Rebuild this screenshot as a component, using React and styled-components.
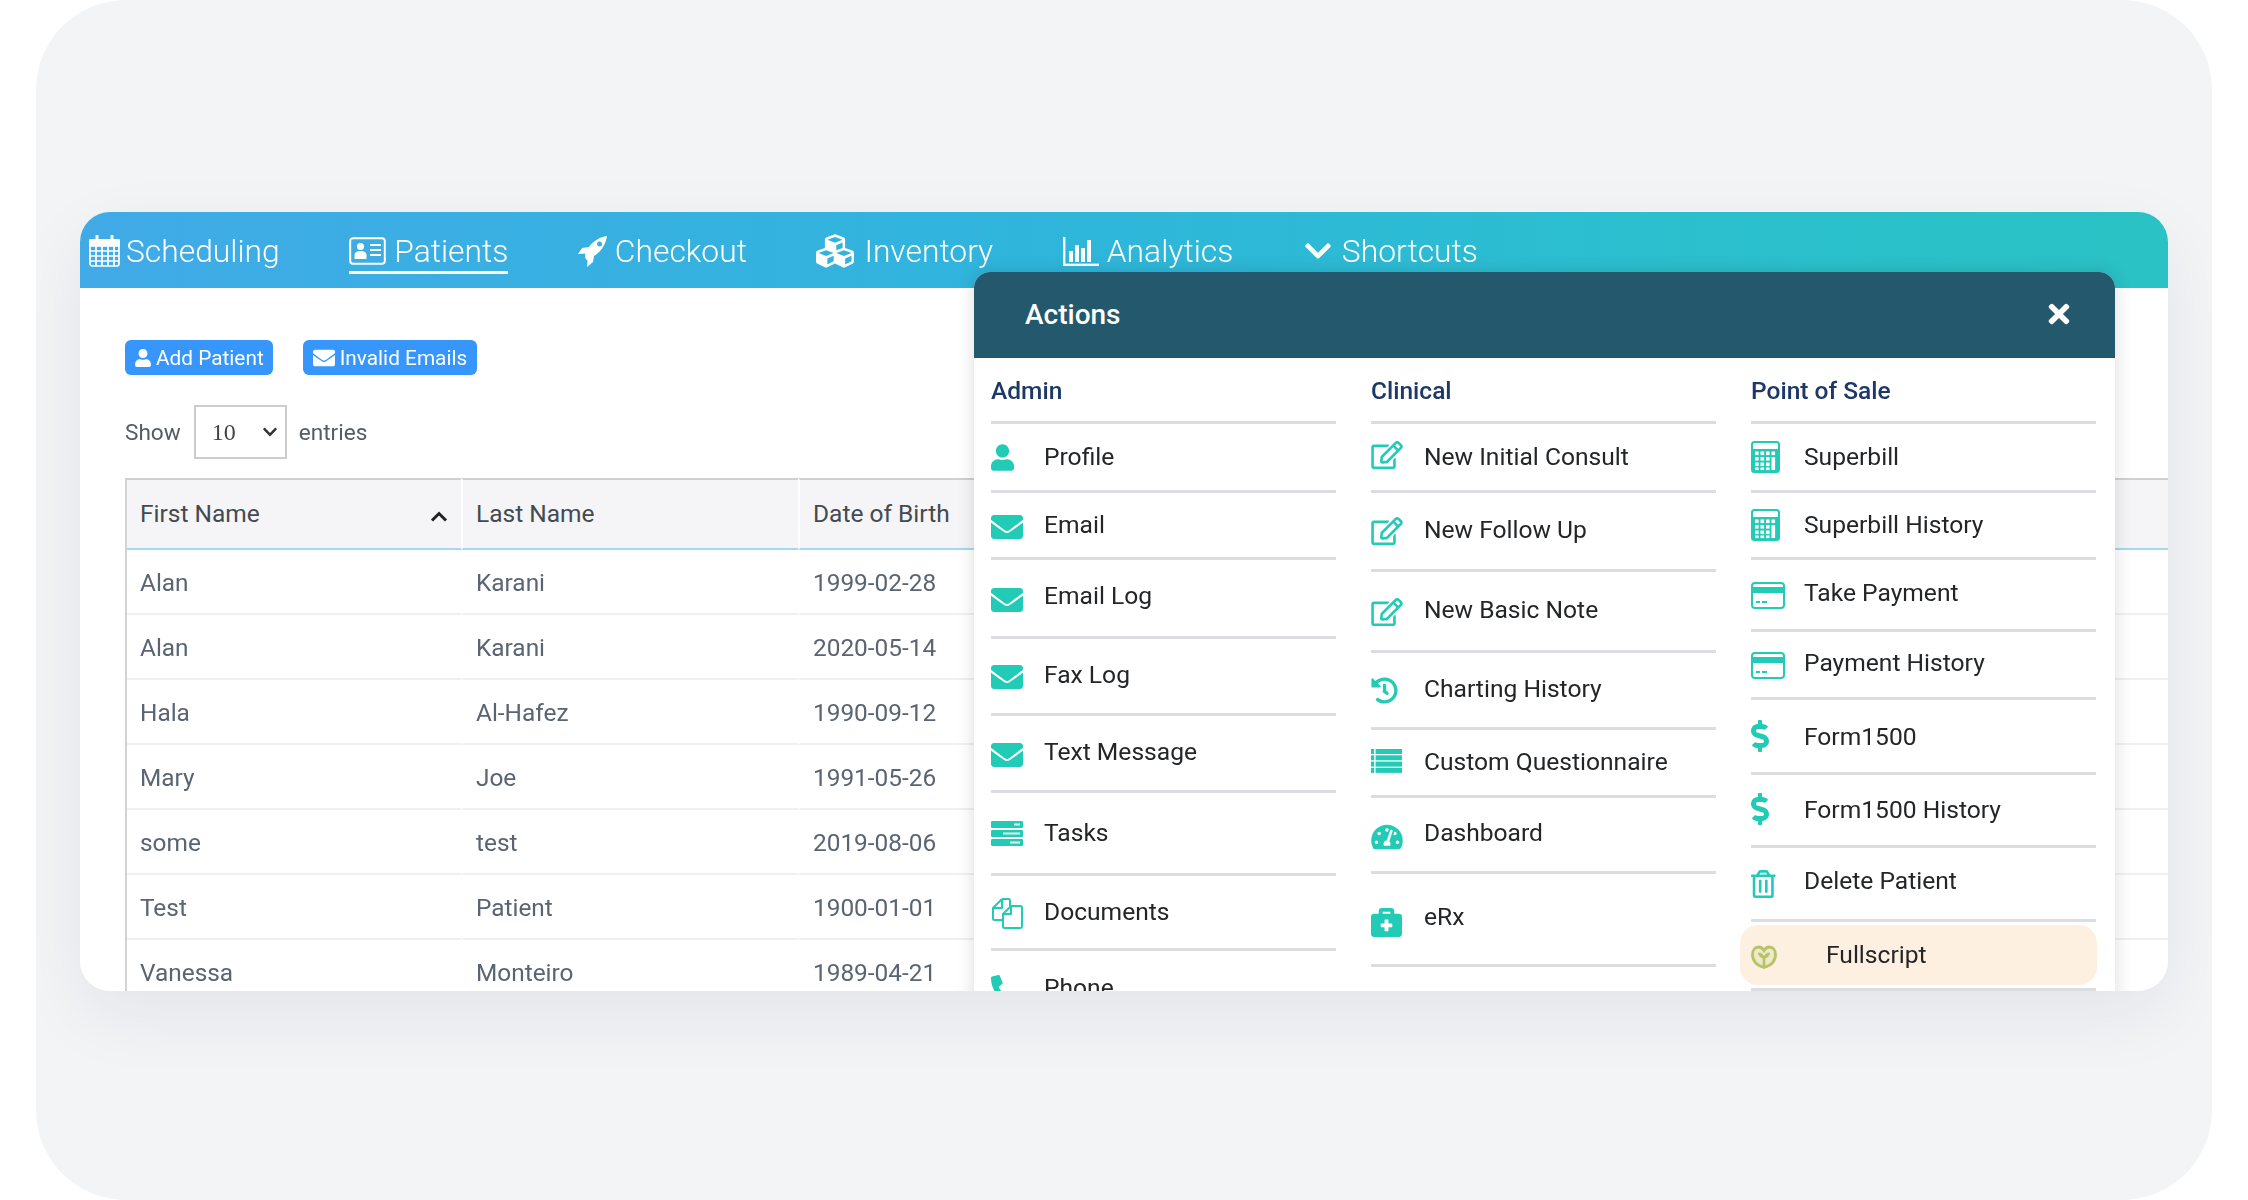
import React from 'react';
import styled, { createGlobalStyle } from 'styled-components';
import {
  FaUser,
  FaEnvelope,
  FaCubes,
  FaChevronDown,
  FaTimes,
  FaRegEdit,
  FaHistory,
  FaTachometerAlt,
  FaBriefcaseMedical,
  FaDollarSign,
  FaRegTrashAlt,
  FaPhoneAlt,
} from 'react-icons/fa';

const GlobalStyle = createGlobalStyle`
  html, body {
    margin: 0;
    padding: 0;
    background: #ffffff;
    overflow: hidden;
    font-family: Roboto, "Liberation Sans", sans-serif;
  }
  * {
    box-sizing: border-box;
  }
`;

const Page = styled.div`
  width: 2248px;
  height: 1200px;
  padding: 0 36px;
`;

const Backdrop = styled.div`
  height: 1200px;
  padding: 212px 44px 0;
  background: #f3f4f6;
  border-radius: 90px;
  overflow: hidden;
`;

const Window = styled.div`
  position: relative;
  height: 779px;
  background: #ffffff;
  border-radius: 30px;
  overflow: hidden;
  box-shadow: 0 24px 70px rgba(20, 30, 50, 0.07);
  /* the shot is an upscaled capture, everything in it is a bit soft */
  filter: blur(0.6px);
`;

const Nav = styled.nav`
  height: 76px;
  padding: 2px 0 0 9px;
  display: flex;
  align-items: center;
  gap: 69.5px;
  background: linear-gradient(90deg, #41aae7 0%, #2fb5dc 45%, #2bbfcf 75%, #2ac2c4 100%);
`;

const NavItem = styled.a`
  position: relative;
  display: flex;
  align-items: center;
  gap: ${(p) => p.$gap || 8}px;
  color: #ffffff;
  font-size: 31.8px;
  font-weight: 300;
  line-height: 40px;

  ${(p) =>
    p.$active &&
    `
    &::after {
      content: '';
      position: absolute;
      left: 0;
      right: 0;
      bottom: -3px;
      height: 3px;
      background: #ffffff;
    }
  `}
`;

const Content = styled.div`
  padding: 52px 0 0 45px;
`;

const Actions = styled.div`
  display: flex;
  gap: 30px;
`;

const Button = styled.button`
  height: 35px;
  padding: 0 ${(p) => p.$pad || 9}px;
  display: flex;
  align-items: center;
  gap: ${(p) => p.$gap || 4}px;
  border: 0;
  border-radius: 6px;
  background: #3696fb;
  color: #ffffff;
  font-family: inherit;
  font-size: 20.8px;
`;

const LengthRow = styled.label`
  margin-top: 30px;
  height: 54px;
  display: flex;
  align-items: center;
  color: #555b63;
  font-size: 22.6px;
`;

const SelectWrap = styled.span`
  position: relative;
  margin: 0 12px 0 13px;
  display: flex;
  color: #333333;
`;

const Select = styled.select`
  width: 93px;
  height: 54px;
  padding-left: 16px;
  appearance: none;
  border: 2px solid #cccccc;
  border-radius: 0;
  background: #ffffff;
  color: #444444;
  font-family: 'Liberation Serif', serif;
  font-size: 24px;
`;

const Caret = styled(FaChevronDown)`
  position: absolute;
  right: 9px;
  top: 19px;
  width: 16px;
  height: 16px;
`;

const Table = styled.table`
  width: 100%;
  margin-top: 19px;
  table-layout: fixed;
  border-collapse: separate;
  border-spacing: 0;
  border-left: 2px solid #d2d3d6;
`;

const Th = styled.th`
  position: relative;
  width: ${(p) => p.$w || 'auto'};
  height: 72px;
  padding: 0 0 2px 13px;
  border-top: 2px solid #cfd0d3;
  border-bottom: 2px solid #a4d8ef;
  border-left: ${(p) => (p.$first ? '0' : '2px solid #ffffff')};
  background: #f5f5f7;
  color: #444a52;
  font-size: 24.5px;
  font-weight: 400;
  text-align: left;
`;

const SortIcon = styled.svg`
  position: absolute;
  right: 13px;
  top: 31px;
  width: 18px;
  height: 11px;
`;

const Td = styled.td`
  height: 65px;
  padding: 1px 0 0 13px;
  border-bottom: 2px solid #f0f0f2;
  border-left: ${(p) => (p.$first ? '0' : '2px solid transparent')};
  color: #5a6472;
  font-size: 24.4px;
`;

const Modal = styled.section`
  position: absolute;
  left: 894px;
  top: 60px;
  width: 1141px;
  height: 800px;
  background: #ffffff;
  border-radius: 16px 16px 0 0;
  box-shadow: 0 0 18px rgba(0, 0, 0, 0.14);
`;

const ModalHeader = styled.header`
  height: 86px;
  padding: 0 41px 2px 51px;
  display: flex;
  align-items: center;
  justify-content: space-between;
  background: #24586d;
  border-radius: 16px 16px 0 0;
  color: #ffffff;
  font-size: 28px;
  font-weight: 500;
`;

const Columns = styled.div`
  padding-left: 17px;
  display: grid;
  grid-template-columns: repeat(3, 345px);
  column-gap: 35px;
`;

const ColumnTitle = styled.h3`
  margin: 0;
  height: 66px;
  padding-top: 1px;
  display: flex;
  align-items: center;
  border-bottom: 3px solid #dcdde0;
  color: #1c3768;
  font-size: 24.5px;
  font-weight: 500;
`;

const List = styled.ul`
  margin: 0;
  padding: 0;
  list-style: none;
`;

const Row = styled.li`
  height: ${(p) => p.$h}px;
  display: flex;
  align-items: center;
  border-bottom: 3px solid #dcdde0;
`;

const Highlight = styled.div`
  width: 357px;
  height: 60px;
  margin-left: -11px;
  padding-left: 11px;
  flex: none;
  display: flex;
  align-items: center;
  background: #fdf0e1;
  border-radius: 18px;
`;

const IconSlot = styled.span`
  width: ${(p) => p.$w || 53}px;
  flex: none;
  display: flex;
  align-items: center;
  margin-top: ${(p) => (p.$dy > 0 ? p.$dy * 2 : 0)}px;
  margin-bottom: ${(p) => (p.$dy < 0 ? -p.$dy * 2 : 0)}px;
  color: #22cbb5;

  ${(p) => p.$iconWidth && `> svg { width: ${p.$iconWidth}px; }`}
`;

const Label = styled.span`
  margin-bottom: ${(p) => p.$up * 2}px;
  color: #232527;
  font-size: 24.6px;
`;

const CalendarIcon = () => (
  <svg width="31" height="32" viewBox="0 0 31 32" fill="none" stroke="currentColor" strokeWidth="1.7">
    <rect x="1" y="5" width="29" height="26" rx="2.5" />
    <rect x="1" y="5" width="29" height="6" fill="currentColor" />
    <path d="M1 16h29M1 21h29M1 26h29M7 11v20M13 11v20M19 11v20M25 11v20" />
    <path d="M8 1v6M23 1v6" strokeWidth="3" strokeLinecap="round" />
  </svg>
);

const IdCardIcon = () => (
  <svg width="37" height="29" viewBox="0 0 37 29" fill="none" stroke="currentColor">
    <path d="M4 1.2h29a2.8 2.8 0 0 1 2.8 2.8v20a2.8 2.8 0 0 1-2.8 2.8H4A2.8 2.8 0 0 1 1.2 24V4A2.8 2.8 0 0 1 4 1.2z" strokeWidth="2" />
    <circle cx="11.5" cy="9.5" r="3.6" fill="currentColor" stroke="none" />
    <path d="M5.5 22v-3.5c0-2.8 2-4.5 6-4.5s6 1.7 6 4.5V22z" fill="currentColor" stroke="none" />
    <path d="M21 8h11M21 13h11M21 18h11" strokeWidth="2" />
  </svg>
);

const RocketIcon = () => (
  <svg width="30" height="32" viewBox="0 0 30 32" fill="currentColor">
    <path
      fillRule="evenodd"
      d="M29 1C22 2 15 6 11 12L4 13 0 19l7.5-.5C6.5 21 7 24 9.5 25.5L9 32l6-5 1-6C23 17 28 9 29 1zM21.5 6.5a2.5 2.5 0 1 1 0 5 2.5 2.5 0 0 1 0-5z"
    />
  </svg>
);

const BarsIcon = () => (
  <svg width="36" height="29" viewBox="0 0 36 29" fill="currentColor">
    <rect x="0" y="0" width="2.4" height="29" />
    <rect x="0" y="26.6" width="36" height="2.4" />
    <rect x="6" y="14" width="4" height="11" />
    <rect x="12" y="8" width="4" height="17" />
    <rect x="18" y="11" width="4" height="14" />
    <rect x="24" y="3" width="4" height="22" />
  </svg>
);

const TasksIcon = () => (
  <svg width="32" height="25" viewBox="0 0 32 25">
    <rect y="0" width="32" height="7" rx="1.2" fill="currentColor" />
    <rect y="9" width="32" height="7" rx="1.2" fill="currentColor" />
    <rect y="18" width="32" height="7" rx="1.2" fill="currentColor" />
    <rect x="23" y="2.4" width="6" height="2.2" fill="#c9f1ea" />
    <rect x="12" y="11.4" width="17" height="2.2" fill="#c9f1ea" />
    <rect x="19" y="20.4" width="10" height="2.2" fill="#c9f1ea" />
  </svg>
);

const FilesIcon = () => (
  <svg width="32" height="32" viewBox="0 0 32 32" fill="none" stroke="currentColor" strokeWidth="2" strokeLinejoin="round">
    <path d="M11 2h6.5a1.5 1.5 0 0 1 1.5 1.5V9M11 2L2 11v10.5A1.5 1.5 0 0 0 3.5 23H12" />
    <path d="M11 2v9H2" />
    <path d="M20 9h9.5a1.5 1.5 0 0 1 1.5 1.5v19a1.5 1.5 0 0 1-1.5 1.5h-16a1.5 1.5 0 0 1-1.5-1.5V17z" />
    <path d="M20 9v8h-8" />
  </svg>
);

const ListIcon = () => (
  <svg width="31" height="24" viewBox="0 0 31 24" fill="currentColor">
    {[0, 6.3, 12.6, 18.9].map((y) => (
      <g key={y}>
        <rect x="0" y={y} width="3.2" height="5" />
        <rect x="4.6" y={y} width="26.4" height="5" />
      </g>
    ))}
  </svg>
);

const CalculatorIcon = () => (
  <svg width="29" height="32" viewBox="0 0 29 32">
    <rect x="1" y="1" width="27" height="30" rx="2.5" fill="none" stroke="currentColor" strokeWidth="2" />
    <rect x="1" y="8" width="27" height="23" rx="1.5" fill="currentColor" />
    {[10.5, 16, 21.5].map((y) =>
      [4, 9.5, 15].map((x) => <rect key={`${x}-${y}`} x={x} y={y} width="3.6" height="3.6" fill="#ffffff" />)
    )}
    <rect x="4" y="26.5" width="3.6" height="2.6" fill="#ffffff" />
    <rect x="9.5" y="26.5" width="3.6" height="2.6" fill="#ffffff" />
    <rect x="15" y="26.5" width="3.6" height="2.6" fill="#ffffff" />
    <rect x="20.5" y="16" width="3.6" height="13" fill="#ffffff" />
    <rect x="20.5" y="10.5" width="3.6" height="3.6" fill="#ffffff" />
  </svg>
);

const CardIcon = () => (
  <svg width="34" height="27" viewBox="0 0 34 27">
    <rect x="1" y="1" width="32" height="25" rx="3" fill="none" stroke="currentColor" strokeWidth="2" />
    <rect x="1" y="5" width="32" height="6" fill="currentColor" />
    <rect x="5" y="19" width="4" height="2" fill="currentColor" />
    <rect x="11" y="19" width="5" height="2" fill="currentColor" />
  </svg>
);

const LeafIcon = () => (
  <svg width="26" height="24" viewBox="0 0 26 24" fill="none" stroke="#b5c46c">
    <path
      d="M13 22.5C6 20.5 1.5 16 1.5 9.5 1.5 5 4 2 7.5 2c2.5 0 4.3 1.3 5.5 3.5C14.2 3.300 16 2 18.5 2c3.5 0 6 3 6 7.5 0 6.500-4.500 11-11.500 13z"
      strokeWidth="2.8"
      fill="#efe9c8"
    />
    <path d="M13 21v-9" strokeWidth="2.6" />
    <path d="M13 13c-3 0-5-1.5-5.5-5 3 0 5 1.5 5.5 5zM13 13c3 0 5-1.5 5.5-5-3 0-5 1.5-5.500 5z" fill="#b5c46c" strokeWidth="1" />
  </svg>
);

const admin = [
  { label: 'Profile', h: 69, dy: 0, up: 1, iconWidth: 23, icon: <FaUser size={27} /> },
  { label: 'Email', h: 67, dy: 2, up: 1, icon: <FaEnvelope size={32} /> },
  { label: 'Email Log', h: 79, dy: 2, up: 3, icon: <FaEnvelope size={32} /> },
  { label: 'Fax Log', h: 77, dy: 1, up: 2, icon: <FaEnvelope size={32} /> },
  { label: 'Text Message', h: 77, dy: 2, up: 2, icon: <FaEnvelope size={32} /> },
  { label: 'Tasks', h: 83, dy: 0, up: 1, icon: <TasksIcon /> },
  { label: 'Documents', h: 75, dy: 1, up: 1, icon: <FilesIcon /> },
  { label: 'Phone', h: 75, dy: 3, up: 0, icon: <FaPhoneAlt size={30} /> },
];

const clinical = [
  { label: 'New Initial Consult', h: 69, dy: -2, up: 1, iconWidth: 32, icon: <FaRegEdit size={28} /> },
  { label: 'New Follow Up', h: 79, dy: 0, up: 2, iconWidth: 32, icon: <FaRegEdit size={28} /> },
  { label: 'New Basic Note', h: 81, dy: 1, up: 2, iconWidth: 32, icon: <FaRegEdit size={28} /> },
  { label: 'Charting History', h: 77, dy: 0, up: 2, icon: <FaHistory size={27} /> },
  { label: 'Custom Questionnaire', h: 68, dy: -2, up: 1, icon: <ListIcon /> },
  { label: 'Dashboard', h: 76, dy: 2, up: 2, iconWidth: 32, icon: <FaTachometerAlt size={28} /> },
  { label: 'eRx', h: 93, dy: 2, up: 3, icon: <FaBriefcaseMedical size={31} /> },
];

const pointOfSale = [
  { label: 'Superbill', h: 69, dy: 0, up: 1, icon: <CalculatorIcon /> },
  { label: 'Superbill History', h: 67, dy: 0, up: 1, icon: <CalculatorIcon /> },
  { label: 'Take Payment', h: 72, dy: 1, up: 2, icon: <CardIcon /> },
  { label: 'Payment History', h: 68, dy: 1, up: 2, icon: <CardIcon /> },
  { label: 'Form1500', h: 75, dy: 0, up: 0, iconWidth: 18, icon: <FaDollarSign size={32} /> },
  { label: 'Form1500 History', h: 73, dy: -1, up: 1, iconWidth: 18, icon: <FaDollarSign size={32} /> },
  { label: 'Delete Patient', h: 74, dy: 0, up: 3, iconWidth: 24.5, icon: <FaRegTrashAlt size={28} /> },
];

const patients = [
  ['Alan', 'Karani', '1999-02-28'],
  ['Alan', 'Karani', '2020-05-14'],
  ['Hala', 'Al-Hafez', '1990-09-12'],
  ['Mary', 'Joe', '1991-05-26'],
  ['some', 'test', '2019-08-06'],
  ['Test', 'Patient', '1900-01-01'],
  ['Vanessa', 'Monteiro', '1989-04-21'],
];

const MenuColumn = ({ title, items, children }) => (
  <div>
    <ColumnTitle>{title}</ColumnTitle>
    <List>
      {items.map((item) => (
        <Row key={item.label} $h={item.h}>
          <IconSlot $dy={item.dy} $iconWidth={item.iconWidth}>{item.icon}</IconSlot>
          <Label $up={item.up}>{item.label}</Label>
        </Row>
      ))}
      {children}
    </List>
  </div>
);

const App = () => (
  <Page>
    <GlobalStyle />
    <Backdrop>
      <Window>
        <Nav>
          <NavItem $gap={6}><CalendarIcon />Scheduling</NavItem>
          <NavItem $active><IdCardIcon />Patients</NavItem>
          <NavItem $gap={7}><RocketIcon />Checkout</NavItem>
          <NavItem $gap={10}><FaCubes size={38} />Inventory</NavItem>
          <NavItem><BarsIcon />Analytics</NavItem>
          <NavItem $gap={9}><FaChevronDown size={30} />Shortcuts</NavItem>
        </Nav>
        <Content>
          <Actions>
            <Button><FaUser size={18} />Add Patient</Button>
            <Button $pad={10} $gap={5}><FaEnvelope size={22} />Invalid Emails</Button>
          </Actions>
          <LengthRow>
            Show
            <SelectWrap>
              <Select defaultValue="10">
                <option value="10">10</option>
                <option value="25">25</option>
                <option value="50">50</option>
              </Select>
              <Caret />
            </SelectWrap>
            entries
          </LengthRow>
          <Table>
            <thead>
              <tr>
                <Th $first $w="334px">
                  First Name
                  <SortIcon viewBox="0 0 18 11" fill="none" stroke="#222" strokeWidth="3">
                    <path d="M2 9.5l7-7 7 7" />
                  </SortIcon>
                </Th>
                <Th $w="337px">Last Name</Th>
                <Th $w="337px">Date of Birth</Th>
                <Th />
              </tr>
            </thead>
            <tbody>
              {patients.map((row, i) => (
                <tr key={i}>
                  <Td $first>{row[0]}</Td>
                  <Td>{row[1]}</Td>
                  <Td>{row[2]}</Td>
                  <Td />
                </tr>
              ))}
            </tbody>
          </Table>
        </Content>
        <Modal>
          <ModalHeader>
            Actions
            <FaTimes size={30} />
          </ModalHeader>
          <Columns>
            <MenuColumn title="Admin" items={admin} />
            <MenuColumn title="Clinical" items={clinical} />
            <MenuColumn title="Point of Sale" items={pointOfSale}>
              <Row $h={69}>
                <Highlight>
                  <IconSlot $w={75} $dy={2}><LeafIcon /></IconSlot>
                  <Label $up={1}>Fullscript</Label>
                </Highlight>
              </Row>
            </MenuColumn>
          </Columns>
        </Modal>
      </Window>
    </Backdrop>
  </Page>
);

export default App;
